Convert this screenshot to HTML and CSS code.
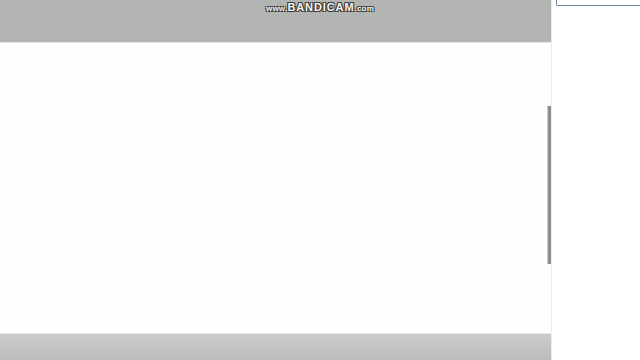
FILE: index.html
```html
<!DOCTYPE html>
<html lang="en">
<head>
    <meta charset="UTF-8">
    <meta name="viewport" content="width=device-width, initial-scale=1.0">
    <title>Recording</title>
    <link rel="stylesheet" href="styles.css">
</head>
<body>

    <div id="screen">
        <div class="main">
            <div class="top-bar"></div>
            <div class="content">
                <!-- Scrollbar thumb -->
                <div class="scroll-thumb"></div>
            </div>
            <div class="bottom-bar"></div>
        </div>
        <div class="side">
            <input class="search" type="text" value="">
        </div>

        <!-- Watermark -->
        <div class="watermark"><span class="small">www.</span>BANDICAM<span class="small">.com</span></div>
    </div>

</body>
</html>
```

FILE: styles.css
```css
body {
    margin: 0;
    font-family: "Liberation Sans", Arial, sans-serif;
    background-color: #fff;
}

#screen {
    position: relative;
    display: flex;
    width: 640px;
    height: 360px;
    overflow: hidden;
}

.main {
    display: flex;
    flex-direction: column;
    flex-shrink: 0;
    width: 551px;
}

.top-bar {
    height: 42px;
    background-color: #b3b5b2;
    border-bottom: 1px solid #e4e6e3;
}

.content {
    position: relative;
    flex: 1;
    background-color: #fefefe;
}

.scroll-thumb {
    position: absolute;
    top: 63px;
    left: 547px;
    width: 3px;
    height: 158px;
    background-color: #8d8e8d;
    border-left: 1px solid #c9cac9;
}

.bottom-bar {
    height: 26px;
    background: linear-gradient(#cbccca, #bcbdba);
    border-top: 1px solid #e9eae8;
}

.side {
    flex: 1;
    min-width: 0;
    overflow: hidden;
    background-color: #fff;
    border-left: 1px solid #ececec;
}

.search {
    display: block;
    box-sizing: border-box;
    width: 90px;
    height: 12px;
    margin: -6px 0 0 4px;
    border: 1px solid #6f8598;
    border-radius: 1px;
    background-color: #fff;
}

.watermark {
    position: absolute;
    top: 1px;
    left: 266px;
    font-size: 11px;
    font-weight: bold;
    letter-spacing: 0.9px;
    color: #f4f4f4;
    text-shadow: -1px -1px 0 #3a3a3a, 1px -1px 0 #3a3a3a, -1px 1px 0 #3a3a3a, 1px 1px 0 #3a3a3a;
}

.watermark .small {
    font-size: 8px;
    letter-spacing: 0.2px;
}
```
